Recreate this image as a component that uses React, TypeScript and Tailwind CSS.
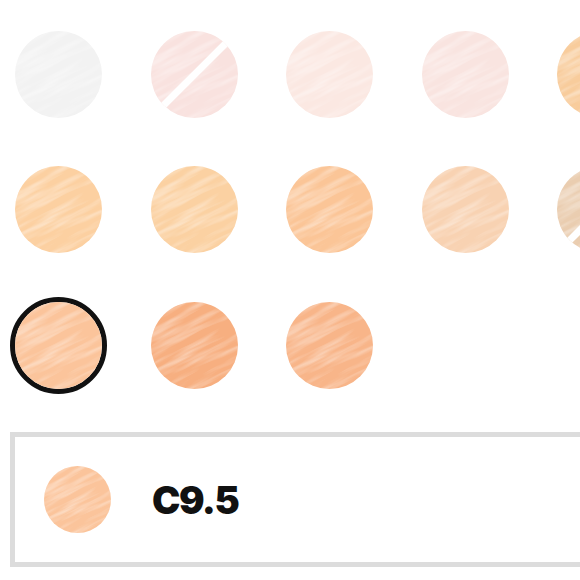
import React from 'react'

type Shade = { color: string; slash?: boolean; selected?: boolean }

const rows: Shade[][] = [
  [
    { color: '#f2f2f2' },
    { color: '#f9e2df', slash: true },
    { color: '#fbe8e2' },
    { color: '#f9e4e0' },
    { color: '#f8cc9c' },
  ],
  [
    { color: '#fcd0a1' },
    { color: '#fbd1a2' },
    { color: '#fbc597' },
    { color: '#f8d2b2' },
    { color: '#eacdb0', slash: true },
  ],
  [{ color: '#fbc49b', selected: true }, { color: '#f7af80' }, { color: '#f8b589' }],
]

// watercolour streaks laid over each swatch
function StreakDefs() {
  return (
    <svg className="absolute w-0 h-0" aria-hidden>
      <defs>
        <filter id="streaks" x="0" y="0" width="100%" height="100%">
          <feTurbulence type="fractalNoise" baseFrequency="0.014 0.13" numOctaves="3" seed="7" />
          <feColorMatrix
            type="matrix"
            values="0 0 0 0 1  0 0 0 0 1  0 0 0 0 1  1.1 0 0 0 -0.48"
          />
        </filter>
      </defs>
    </svg>
  )
}

function Swatch({ color, slash, size }: { color: string; slash?: boolean; size: string }) {
  return (
    <div className={`${size} rounded-full overflow-hidden shrink-0`}>
      <svg viewBox="0 0 100 100" className="block w-full h-full">
        <rect width="100" height="100" fill={color} />
        <g transform="rotate(-27 50 50)">
          <rect x="-40" y="-40" width="180" height="180" filter="url(#streaks)" />
        </g>
        {slash && <line x1="-2" y1="102" x2="102" y2="-2" stroke="#fff" strokeWidth="8" />}
      </svg>
    </div>
  )
}

export default function App() {
  return (
    <div className="relative w-[580px] h-[580px] overflow-hidden bg-white">
      <StreakDefs />

      {/* shade grid */}
      <div className="flex flex-col gap-[38.5px] pt-[25.5px] pl-[10px]">
        {rows.map((row, i) => (
          <div key={i} className="flex gap-[38.5px]">
            {row.map((s, j) => (
              <div key={j} className="w-[97px] h-[97px] shrink-0 flex items-center justify-center">
                {s.selected ? (
                  <div className="w-[97px] h-[97px] rounded-full border-[5px] border-[#111111]">
                    <Swatch color={s.color} size="w-[87px] h-[87px]" />
                  </div>
                ) : (
                  <Swatch color={s.color} slash={s.slash} size="w-[87px] h-[87px]" />
                )}
              </div>
            ))}
          </div>
        ))}
      </div>

      {/* selected shade */}
      <div className="mt-[38.5px] ml-[10px] w-[620px] h-[135px] border-[5px] border-[#dcdcdc] flex items-center pl-[29px] gap-[41px]">
        <Swatch color="#fbc49b" size="w-[67px] h-[67px]" />
        <span className="[font-family:Inter,sans-serif] font-black text-[38px] leading-none text-[#111111] tracking-[-1.5px]">
          C9.5
        </span>
      </div>
    </div>
  )
}
